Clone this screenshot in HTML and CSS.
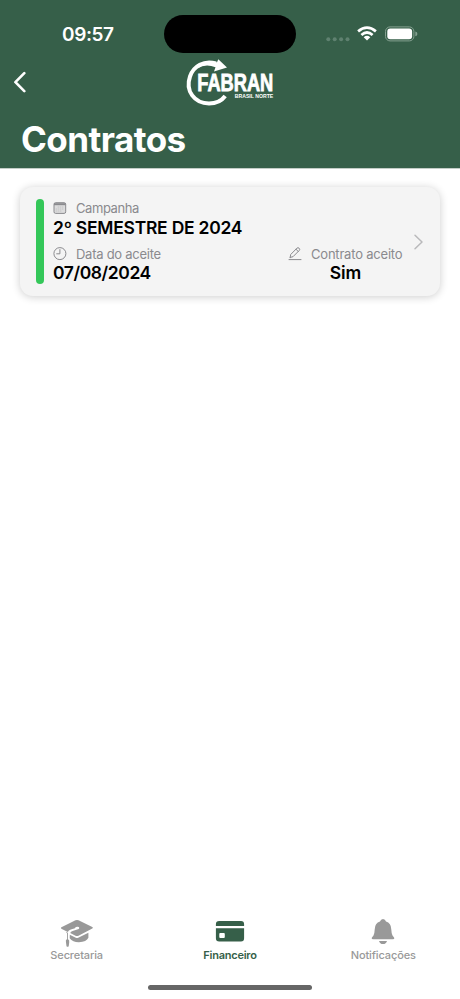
FILE: index.html
```html
<!DOCTYPE html>
<html lang="pt-BR">
<head>
<meta charset="utf-8">
<meta name="viewport" content="width=device-width, initial-scale=1">
<title>Contratos</title>
<link rel="stylesheet" href="styles.css">
</head>
<body>
<div class="screen">
  <header class="header">
    <div class="status">
      <span class="time">09:57</span>
      <span class="island"></span>
      <svg class="indicators" width="94" height="20" viewBox="0 0 94 20">
        <g fill="#5f8170"><circle cx="4.3" cy="15.2" r="2"/><circle cx="10.7" cy="15.2" r="2"/><circle cx="17.1" cy="15.2" r="2"/><circle cx="23.5" cy="15.2" r="2"/></g>
        <g fill="none" stroke="#fff" stroke-width="2.7"><path d="M34.1 7.4Q43 -.2 51.9 7.4"/><path d="M37.4 11Q43 6 48.6 11"/></g>
        <path d="M39.7 13.2Q43 10.3 46.3 13.2L43 16.6Z" fill="#fff"/>
        <rect x="61.5" y="2.9" width="28.4" height="14" rx="4.5" fill="none" stroke="#84a090"/>
        <rect x="63.3" y="4.6" width="24.8" height="10.6" rx="3" fill="#fff"/>
        <path d="M91.3 7.6Q93.4 8 93.4 9.9Q93.4 11.8 91.3 12.2Z" fill="#84a090"/>
      </svg>
    </div>
    <nav class="navbar">
      <svg class="back" width="14" height="22" viewBox="0 0 14 22"><path d="M11.3 2.2L2.4 11.2L11.3 20.2" fill="none" stroke="#fff" stroke-width="2.6" stroke-linecap="round" stroke-linejoin="round"/></svg>
      <svg class="logo" width="100" height="56" viewBox="0 0 100 56">
        <path d="M36 9.5C24 6 13.5 12 10 22.5C5 37 14.5 49.5 29 49.5C36.5 49.5 41.5 47 45.2 42" fill="none" stroke="#fff" stroke-width="4"/>
        <path d="M38.3 5.2L47 13.6L34 17.4L35.5 13.3Q25.5 9 17.5 14.5Q25 5.5 37 8.3Z" fill="#fff"/>
        <text class="logo-name" x="17.3" y="37.3" textLength="76" lengthAdjust="spacingAndGlyphs">FABRAN</text>
        <text class="logo-region" x="54.8" y="44.3" textLength="38.5" lengthAdjust="spacingAndGlyphs">BRASIL NORTE</text>
      </svg>
    </nav>
    <h1 class="title">Contratos</h1>
  </header>
  <main class="content">
    <article class="card">
      <span class="bar"></span>
      <div class="details">
        <div class="label campaign">
          <svg width="14" height="14" viewBox="0 0 14 14"><rect x="1" y="1.7" width="11.7" height="10.7" rx="1.6" fill="#dcdcdd" stroke="#8a8a8e"/><path d="M1 3.2H12.7" stroke="#8a8a8e" stroke-width="2"/><path d="M4.7 6H11M2.7 8H11M2.7 10H9" stroke="#bbb" stroke-width=".8" stroke-dasharray="1.2 .8"/></svg>
          <span>Campanha</span>
        </div>
        <strong class="value semester">2º SEMESTRE DE 2024</strong>
        <div class="row">
          <div>
            <div class="label date">
              <svg width="14" height="14" viewBox="0 0 14 14"><g fill="none" stroke="#8a8a8e"><circle cx="6.9" cy="6.6" r="6"/><path d="M6.9 2.6V6.8H3.7" stroke-linecap="round"/></g></svg>
              <span>Data do aceite</span>
            </div>
            <strong class="value day">07/08/2024</strong>
          </div>
          <div class="accepted">
            <div class="label contract">
              <svg width="14" height="14" viewBox="0 0 14 14"><g fill="none" stroke="#8a8a8e" stroke-linecap="round" stroke-linejoin="round"><path d="M2.2 10.4L2.7 7.5L9 1.1Q10 .2 11.1 1.2Q12.3 2.3 11.3 3.4L5 9.7L2.2 10.4ZM8 2.2L10.2 4.5"/><path d="M1 12.6H13"/></g></svg>
              <span>Contrato aceito</span>
            </div>
            <strong class="value yes">Sim</strong>
          </div>
        </div>
      </div>
      <svg class="chevron" width="12" height="18" viewBox="0 0 12 18"><path d="M2 2.2L9 9L2 15.8" fill="none" stroke="#b9b9bb" stroke-width="1.5" stroke-linecap="round" stroke-linejoin="round"/></svg>
    </article>
  </main>
  <footer>
    <nav class="tabs">
      <a class="tab secretary">
        <svg width="34" height="30" viewBox="0 0 34 30"><g fill="#999"><path d="M1.4 10.7Q.2 10 1.4 9.3L15.5 2.3Q17 1.5 18.5 2.3L32.3 9.1Q33.6 9.8 32.3 10.6L18.5 17.7Q17 18.5 15.5 17.7L10.2 15Q10.8 13.5 12.6 12.9L17.2 11.4Q19.3 11.2 19.3 9.9Q19.2 8.6 17 8.8Q15.2 9 14.9 10.2L10.8 11.6Q8.5 12.5 7.8 13.9Z"/><path d="M9.8 16.8L15.8 19.7Q17 20.3 18.2 19.7L28.4 14.7V19.8Q26.5 24 19 24.2Q12.8 24.3 9.7 20.3Z"/><path d="M5.7 13.8L7.9 14.8V21Q9.8 22.3 9.2 24.5L8.7 28.3Q7.6 29.4 6.5 28.3L6 24.5Q5.2 22.1 7 21V15.2Z"/></g></svg>
        <span>Secretaria</span>
      </a>
      <a class="tab finance active">
        <svg width="34" height="30" viewBox="0 0 34 30"><path fill="#365f49" fill-rule="evenodd" d="M2.9 8V6.2Q2.9 3 6.2 3H28Q31.1 3 31.1 6.2V8ZM2.9 10.2H31.1V20.2Q31.1 23.4 28 23.4H6.2Q2.9 23.4 2.9 20.2ZM7.2 15Q6.3 15 6.3 15.9V19.1Q6.3 20 7.2 20H10.9Q11.8 20 11.8 19.1V15.9Q11.8 15 10.9 15Z"/></svg>
        <span>Financeiro</span>
      </a>
      <a class="tab notices">
        <svg width="34" height="30" viewBox="0 0 34 30"><path fill="#999" d="M7.2 21.3Q5.5 21.3 5.7 19.9Q6 18.9 7.5 17.4Q8.5 16 8.7 11.5Q8.9 4.9 14 3.6Q14.8.9 17 .9Q19.2.9 20 3.6Q25.1 4.9 25.3 11.5Q25.5 16 26.5 17.4Q28 18.9 28.3 19.9Q28.5 21.3 26.8 21.3ZM13 23H21Q20.2 26.1 17 26.1Q13.8 26.1 13 23Z"/></svg>
        <span>Notificações</span>
      </a>
    </nav>
    <div class="home-bar"></div>
  </footer>
</div>
</body>
</html>
```

FILE: styles.css
```css
* { box-sizing: border-box; }
body { margin: 0; background: #fff; font-family: Inter, "Liberation Sans", sans-serif; color: #000; }
.screen { width: 460px; height: 999px; display: flex; flex-direction: column; overflow: hidden; }
.header { height: 169px; flex: none; background: #365f49; color: #fff; border-bottom: 1px solid #c3cdc7; }
.status { height: 54px; display: grid; grid-template-columns: 164px 132px 164px; }
.time { padding: 23px 0 0 62px; font-size: 19px; line-height: 23px; font-weight: 600; letter-spacing: -.4px; }
.island { margin-top: 15px; width: 132px; height: 38px; border-radius: 19px; background: #000; }
.indicators { margin: 24px 0 0 28px; }
.navbar { height: 56px; display: grid; grid-template-columns: 180px 100px 180px; }
.back { margin: 17px 0 0 13px; }
.logo { overflow: visible; }
.logo-name { fill: #fff; font: 700 23.5px "Liberation Sans", sans-serif; stroke: #fff; stroke-width: .8px; }
.logo-region { fill: #fff; font: 700 5.6px "Liberation Sans", sans-serif; }
.title { margin: 7px 0 0 21px; font-size: 35px; line-height: 44px; font-weight: 700; letter-spacing: -.55px; }
.content { flex: 1; padding: 18px 20px; }
.card { display: flex; height: 109px; border-radius: 13px; background: #f4f4f4; box-shadow: 0 1px 9px rgba(0, 0, 0, .2); padding: 12px 0 0 16px; }
.bar { width: 8px; height: 85px; border-radius: 4px; background: #34c759; }
.details { flex: none; width: 350px; margin-left: 9px; }
.label { display: flex; align-items: center; height: 17px; color: #8a8a8e; font-size: 13px; line-height: 17px; }
.label svg { flex: none; }
.label span { margin: 1px 0 0 9px; white-space: nowrap; }
.campaign span { letter-spacing: -.43px; }
.date span { letter-spacing: -.26px; }
.contract span { letter-spacing: -.2px; }
.value { display: block; height: 22px; padding-top: 1px; font-size: 17.5px; line-height: 22px; font-weight: 600; white-space: nowrap; }
.semester { letter-spacing: -.25px; }
.day { letter-spacing: -.42px; }
.row { display: flex; justify-content: space-between; margin-top: 7px; }
.row .value { padding-top: 0; }
.accepted { width: 115px; }
.yes { text-align: center; }
.chevron { flex: none; margin: 34px 0 0 9.5px; }
.tabs { display: flex; height: 74px; }
.tab { flex: 1; display: flex; flex-direction: column; align-items: center; color: #999; font-size: 11px; line-height: 14px; font-weight: 500; letter-spacing: -.12px; }
.tab.active { color: #365f49; font-weight: 600; letter-spacing: -.25px; }
.home-bar { width: 164px; height: 5px; margin: -7px auto 9px; border-radius: 3px; background: #666; }
footer { height: 81px; flex: none; }
```
